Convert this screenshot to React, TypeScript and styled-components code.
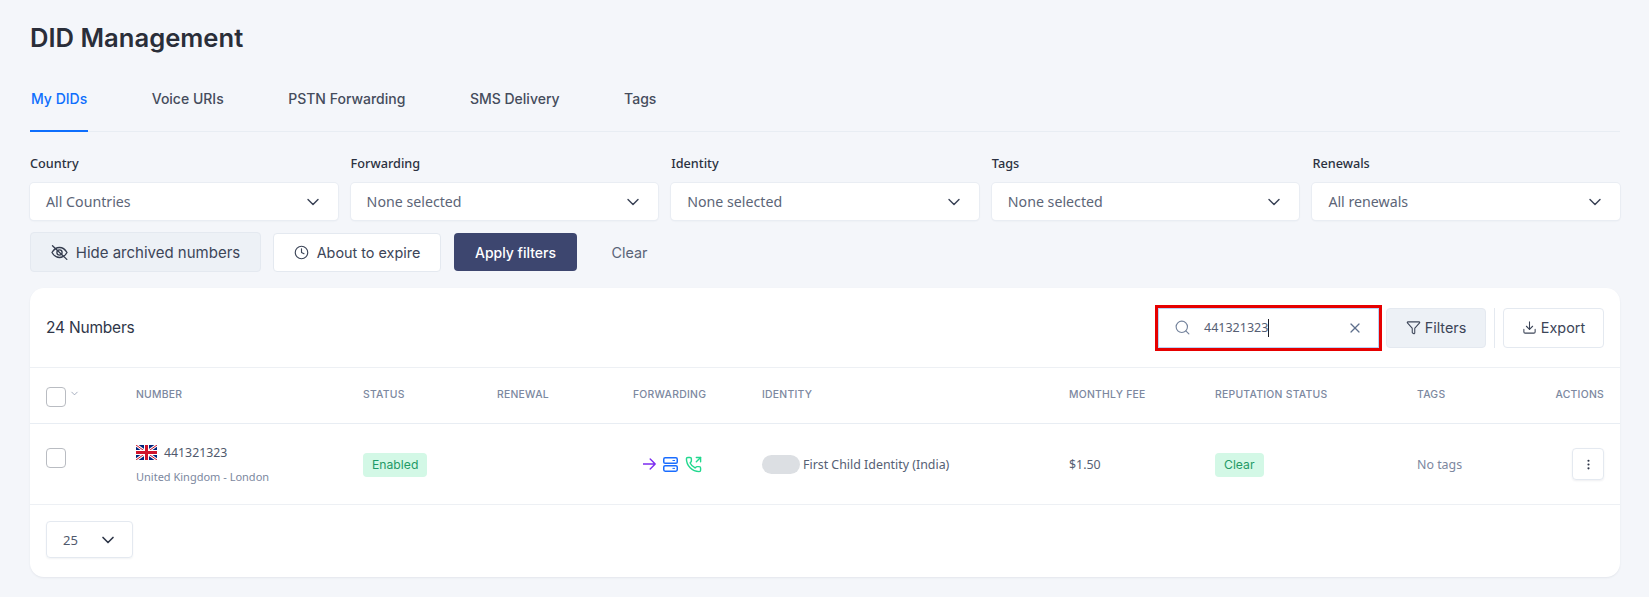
import React, { FC } from "react";
import styled, { createGlobalStyle } from "styled-components";
import {
  ChevronDown,
  Clock,
  Download,
  EllipsisVertical,
  Funnel,
  PhoneOutgoing,
  Search,
  X,
} from "lucide-react";

const heading = `Inter, "Liberation Sans", sans-serif`;
const body = `"Noto Sans", "Open Sans", sans-serif`;

const GlobalStyle = createGlobalStyle`
  html, body {
    margin: 0;
    padding: 0;
    background: #f4f6fa;
  }
  * {
    box-sizing: border-box;
  }
`;

const tabs = ["My DIDs", "Voice URIs", "PSTN Forwarding", "SMS Delivery", "Tags"];

const filters = [
  { label: "Country", value: "All Countries" },
  { label: "Forwarding", value: "None selected" },
  { label: "Identity", value: "None selected" },
  { label: "Tags", value: "None selected" },
  { label: "Renewals", value: "All renewals" },
];

const FlagUK: FC = () => (
  <svg width="21" height="15" viewBox="0 0 21 15">
    <rect width="21" height="15" fill="#00247d" />
    <path d="M0 0L21 15M21 0L0 15" stroke="#fff" strokeWidth="3" />
    <path d="M0 0L21 15M21 0L0 15" stroke="#cf142b" strokeWidth="1" />
    <path d="M10.5 0V15M0 7.5H21" stroke="#fff" strokeWidth="5" />
    <path d="M10.5 0V15M0 7.5H21" stroke="#cf142b" strokeWidth="3" />
  </svg>
);

const HiddenEye: FC = () => (
  <svg width="17" height="15" viewBox="0 0 17 15" fill="none" stroke="#343c4e" strokeWidth="1.3">
    <path d="M1 7.5C3 4 5.5 2.5 8.5 2.5S14 4 16 7.5C14 11 11.5 12.5 8.5 12.5S3 11 1 7.5Z" />
    <circle cx="8.5" cy="7.5" r="2.6" />
    <path d="M1.5 0.8L15.8 14.4" strokeLinecap="round" />
  </svg>
);

const ForwardArrow: FC = () => (
  <svg width="13" height="12" viewBox="0 0 13 12" fill="none" stroke="#7c2df0" strokeWidth="1.4">
    <path d="M0 6H12.2M7.2 1L12.2 6L7.2 11" strokeLinecap="round" strokeLinejoin="round" />
  </svg>
);

const ServerIcon: FC = () => (
  <svg width="15" height="15" viewBox="0 0 15 15" fill="none" stroke="#1a6dff" strokeWidth="1.5">
    <rect x="0.75" y="0.75" width="13.5" height="5.6" rx="1.4" />
    <rect x="0.75" y="8.65" width="13.5" height="5.6" rx="1.4" />
    <path d="M9.5 3.5H12M9.5 11.4H12" strokeWidth="1" />
  </svg>
);

const App: FC = () => (
  <Page>
    <GlobalStyle />
    <Title>DID Management</Title>

    <TabBar>
      {tabs.map((tab, i) => (
        <Tab key={tab} $active={i === 0}>
          {tab}
        </Tab>
      ))}
    </TabBar>

    <FilterGrid>
      {filters.map((f) => (
        <FilterField key={f.label}>
          <FilterLabel>{f.label}</FilterLabel>
          <SelectBox>
            {f.value}
            <ChevronDown size={20} color="#3a4256" strokeWidth={1.7} />
          </SelectBox>
        </FilterField>
      ))}
    </FilterGrid>

    <ButtonRow>
      <ToggleButton>
        <HiddenEye />
        Hide archived numbers
      </ToggleButton>
      <OutlineButton>
        <Clock size={15} strokeWidth={1.8} />
        About to expire
      </OutlineButton>
      <PrimaryButton>Apply filters</PrimaryButton>
      <TextButton>Clear</TextButton>
    </ButtonRow>

    <Card>
      <CardHeader>
        <CardTitle>24 Numbers</CardTitle>
        <SearchHighlight>
          <SearchField>
            <Search size={17} color="#74839c" strokeWidth={1.6} />
            <SearchText>
              441321323
              <Caret />
            </SearchText>
            <X size={16} color="#5d6f8c" strokeWidth={1.8} />
          </SearchField>
        </SearchHighlight>
        <FilterButton>
          <Funnel size={15} strokeWidth={1.7} />
          Filters
        </FilterButton>
        <HeaderDivider />
        <ExportButton>
          <Download size={15} strokeWidth={1.7} />
          Export
        </ExportButton>
      </CardHeader>

      <HeadRow>
        <HeadCheck>
          <CheckBox />
          <SmallChevron size={11} color="#8792a8" strokeWidth={1.6} />
        </HeadCheck>
        <HeadCell>Number</HeadCell>
        <HeadCell>Status</HeadCell>
        <HeadCell>Renewal</HeadCell>
        <HeadCell>Forwarding</HeadCell>
        <HeadCell>Identity</HeadCell>
        <HeadCell>Monthly fee</HeadCell>
        <HeadCell>Reputation status</HeadCell>
        <HeadCell>Tags</HeadCell>
        <HeadCell $right>Actions</HeadCell>
      </HeadRow>

      <BodyRow>
        <RowCheck />
        <NumberCell>
          <NumberLine>
            <FlagUK />
            441321323
          </NumberLine>
          <SubText>United Kingdom - London</SubText>
        </NumberCell>
        <div>
          <Badge>Enabled</Badge>
        </div>
        <div />
        <ForwardIcons>
          <ForwardArrow />
          <ServerIcon />
          <PhoneOutgoing size={17} color="#22d88f" strokeWidth={2} />
        </ForwardIcons>
        <IdentityCell>
          <RedactedBlob />
          First Child Identity (India)
        </IdentityCell>
        <Cell>$1.50</Cell>
        <div>
          <Badge>Clear</Badge>
        </div>
        <MutedCell>No tags</MutedCell>
        <ActionCell>
          <ActionButton>
            <EllipsisVertical size={13} color="#2e3648" strokeWidth={2} />
          </ActionButton>
        </ActionCell>
      </BodyRow>

      <CardFooter>
        <PageSize>
          25
          <ChevronDown size={20} color="#2e3648" strokeWidth={2} />
        </PageSize>
      </CardFooter>
    </Card>
  </Page>
);

const Page = styled.div`
  width: 1649px;
  height: 597px;
  padding: 0 29px 0 30px;
  background: #f4f6fa;
  font-family: ${body};
  overflow: hidden;
`;

const Title = styled.h1`
  margin: 0;
  padding-top: 22px;
  height: 73px;
  font-family: ${heading};
  font-size: 25.6px;
  line-height: 32px;
  font-weight: 600;
  color: #2a2e39;
`;

const TabBar = styled.div`
  display: flex;
  gap: 62.5px;
  height: 59px;
  border-bottom: 1px solid #e8edf3;
`;

const Tab = styled.div<{ $active?: boolean }>`
  height: 59px;
  padding: 14px 1px 0;
  font-family: ${heading};
  font-size: 14px;
  line-height: 24px;
  font-weight: 500;
  color: ${({ $active }) => ($active ? "#0d6efd" : "#454c5c")};
  border-bottom: 2px solid ${({ $active }) => ($active ? "#0d6efd" : "transparent")};
`;

const FilterGrid = styled.div`
  display: grid;
  grid-template-columns: repeat(5, 1fr);
  gap: 13px;
  padding-top: 21px;
`;

const FilterField = styled.div`
  display: flex;
  flex-direction: column;
  gap: 10px;
`;

const FilterLabel = styled.div`
  font-size: 12.7px;
  line-height: 20px;
  font-weight: 500;
  color: #2b3140;
`;

const SelectBox = styled.div`
  display: flex;
  align-items: center;
  justify-content: space-between;
  height: 37px;
  padding: 0 15px 0 16px;
  background: #fff;
  border-radius: 4px;
  box-shadow: 0 0 0 1px #e9edf3, 0 1px 2px rgba(40, 50, 80, 0.08);
  font-size: 14.2px;
  line-height: 35px;
  color: #5c6577;
`;

const ButtonRow = styled.div`
  display: flex;
  align-items: center;
  gap: 12px;
  margin-top: 12px;
`;

const BaseButton = styled.div`
  display: flex;
  align-items: center;
  justify-content: center;
  height: 40px;
  border-radius: 4px;
  font-family: ${heading};
  font-size: 14.4px;
  color: #3c4558;
`;

const ToggleButton = styled(BaseButton)`
  gap: 8px;
  width: 231px;
  font-size: 15px;
  background: #edf1f6;
  border: 1px solid #e4e9f0;
`;

const OutlineButton = styled(BaseButton)`
  gap: 8px;
  width: 168px;
  height: 39px;
  background: #fff;
  border: 1px solid #e4e9f0;
`;

const PrimaryButton = styled(BaseButton)`
  width: 123px;
  height: 38px;
  margin-left: 1px;
  font-size: 14px;
  background: #3d466f;
  color: #fff;
  font-weight: 500;
`;

const TextButton = styled(BaseButton)`
  width: 39px;
  margin-left: 21px;
  color: #5a6478;
`;

const Card = styled.div`
  margin-top: 16px;
  height: 289px;
  background: #fff;
  border-radius: 14px;
  box-shadow: 0 1px 2px rgba(40, 50, 80, 0.08);
`;

const CardHeader = styled.div`
  display: flex;
  align-items: center;
  height: 80px;
  padding: 0 16px;
  border-bottom: 1px solid #edf0f4;
`;

const CardTitle = styled.div`
  margin-right: auto;
  font-family: ${heading};
  font-size: 15.5px;
  letter-spacing: -0.2px;
  color: #2f3648;
`;

const SearchHighlight = styled.div`
  width: 227px;
  height: 46px;
  border: 3px solid #e60000;
`;

const SearchField = styled.div`
  display: flex;
  align-items: center;
  height: 100%;
  padding: 0 16px;
  background: #fff;
  box-shadow: inset 0 0 0 1px #b9d3f7;
`;

const SearchText = styled.div`
  display: flex;
  align-items: center;
  flex: 1;
  margin-left: 13px;
  font-size: 12.5px;
  color: #566074;
`;

const Caret = styled.span`
  display: inline-block;
  width: 1px;
  height: 18px;
  background: #1b1f2a;
`;

const FilterButton = styled(BaseButton)`
  gap: 4px;
  width: 100px;
  margin-left: 4px;
  background: #edf1f6;
  border: 1px solid #e4e9f0;
`;

const HeaderDivider = styled.div`
  width: 1px;
  height: 40px;
  margin: 0 8px;
  background: #e4e9f0;
`;

const ExportButton = styled(BaseButton)`
  gap: 4px;
  width: 101px;
  background: #fff;
  border: 1px solid #e4e9f0;
`;

const columns = "90px 227px 134px 136px 129px 307px 146px 202px 100px 1fr";

const HeadRow = styled.div`
  display: grid;
  grid-template-columns: ${columns};
  align-items: center;
  height: 56px;
  padding: 0 16px 2px;
  border-bottom: 1px solid #e8edf3;
`;

const HeadCheck = styled.div`
  display: flex;
  align-items: center;
  gap: 3px;
  margin-top: 4px;
`;

const SmallChevron = styled(ChevronDown)`
  margin-bottom: 6px;
`;

const HeadCell = styled.div<{ $right?: boolean }>`
  font-family: ${heading};
  font-size: 10.4px;
  font-weight: 500;
  letter-spacing: 0.25px;
  text-transform: uppercase;
  color: #7c88a0;
  text-align: ${({ $right }) => ($right ? "right" : "left")};
`;

const CheckBox = styled.div`
  width: 20px;
  height: 20px;
  background: #fff;
  border: 1px solid #b9bcc2;
  border-radius: 4px;
`;

const RowCheck = styled(CheckBox)`
  align-self: start;
  margin-top: 24px;
`;

const BodyRow = styled.div`
  display: grid;
  grid-template-columns: ${columns};
  align-items: center;
  height: 81px;
  padding: 0 16px;
  border-bottom: 1px solid #edf0f4;
`;

const NumberCell = styled.div`
  display: flex;
  flex-direction: column;
  gap: 8px;
`;

const NumberLine = styled.div`
  display: flex;
  align-items: center;
  gap: 7px;
  font-size: 12.3px;
  line-height: 17px;
  color: #4f596c;
`;

const SubText = styled.div`
  font-size: 11px;
  line-height: 16px;
  color: #7c88a0;
`;

const Badge = styled.span`
  display: inline-block;
  padding: 0 9px;
  height: 24px;
  line-height: 24px;
  border-radius: 4px;
  background: #d3f8e6;
  font-family: ${heading};
  font-size: 12.2px;
  color: #1f9a66;
`;

const ForwardIcons = styled.div`
  display: flex;
  align-items: center;
  gap: 7px;
  padding-left: 10px;
`;

const Cell = styled.div`
  font-size: 12.4px;
  color: #566074;
`;

const MutedCell = styled(Cell)`
  color: #7c88a0;
`;

const IdentityCell = styled(Cell)`
  display: flex;
  align-items: center;
  gap: 3px;
`;

const RedactedBlob = styled.span`
  width: 38px;
  height: 19px;
  border-radius: 10px;
  background: #dcdfe3;
`;

const ActionCell = styled.div`
  display: flex;
  justify-content: flex-end;
`;

const ActionButton = styled.div`
  display: flex;
  align-items: center;
  justify-content: center;
  width: 32px;
  height: 32px;
  border-radius: 4px;
  border: 1px solid #e4e9f0;
  box-shadow: 0 1px 2px rgba(40, 50, 80, 0.08);
`;

const CardFooter = styled.div`
  padding: 16px 16px;
`;

const PageSize = styled.div`
  display: flex;
  align-items: center;
  justify-content: space-between;
  width: 87px;
  height: 37px;
  padding: 0 14px 0 16px;
  border: 1px solid #e4e9f0;
  border-radius: 4px;
  font-size: 13px;
  color: #4f596c;
  box-shadow: 0 1px 2px rgba(40, 50, 80, 0.06);
`;

export default App;
